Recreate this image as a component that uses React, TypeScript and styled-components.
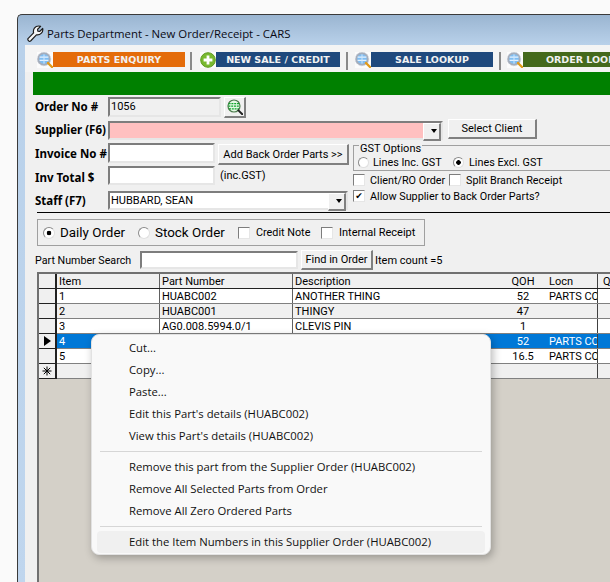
import { Fragment } from "react";
import { createGlobalStyle, styled } from "styled-components";

const GlobalStyle = createGlobalStyle`
  html, body { margin: 0; padding: 0; background: #fafafa; }
  * { box-sizing: border-box; }
`;

const FORM_FONT = `Roboto, "Liberation Sans", sans-serif`;

const tabs = [
  { label: "PARTS ENQUIRY", colour: "#e46c0a", width: 132, icon: "search", before: 5, after: 8 },
  { label: "NEW SALE / CREDIT", colour: "#1f497d", width: 124, icon: "plus", before: 6, after: 7 },
  { label: "SALE LOOKUP", colour: "#1f497d", width: 122, icon: "search", before: 6, after: 6 },
  { label: "ORDER LOOKUP", colour: "#44691c", width: 130, icon: "search", before: 0, after: 0 },
];

const rows = [
  { item: "1", part: "HUABC002", desc: "ANOTHER THING", qoh: "52", locn: "PARTS COUNTER" },
  { item: "2", part: "HUABC001", desc: "THINGY", qoh: "47", locn: "" },
  { item: "3", part: "AG0.008.5994.0/1", desc: "CLEVIS PIN", qoh: "1", locn: "" },
  { item: "4", part: "HUABC002", desc: "ANOTHER THING", qoh: "52", locn: "PARTS COUNTER" },
  { item: "5", part: "HUABC001", desc: "THINGY", qoh: "16.5", locn: "PARTS COUNTER" },
];

const menuGroups = [
  ["Cut...", "Copy...", "Paste...", "Edit this Part's details (HUABC002)", "View this Part's details (HUABC002)"],
  ["Remove this part from the Supplier Order (HUABC002)", "Remove All Selected Parts from Order", "Remove All Zero Ordered Parts"],
  ["Edit the Item Numbers in this Supplier Order (HUABC002)"],
];

export default function App() {
  return (
    <Page>
      <GlobalStyle />
      <Window>
        <TitleBar>
          <WrenchIcon />
          <TitleText>Parts Department - New Order/Receipt - CARS</TitleText>
        </TitleBar>
        <Client>
          <TabStrip>
            {tabs.map((t, i) => (
              <Tab key={t.label}>
                {t.icon === "plus" ? <PlusIcon /> : <SearchIcon />}
                <TabLabel $colour={t.colour} $width={t.width}>{t.label}</TabLabel>
                {i < 3 && <TabDivider $before={t.before} $after={t.after} />}
              </Tab>
            ))}
          </TabStrip>
          <GreenBar />
          <FormArea>
            <FormRow $height={22}>
              <FieldLabel $drop={-2}>Order No #</FieldLabel>
              <ReadOnlyInput>1056</ReadOnlyInput>
              <IconButton><LookupIcon /></IconButton>
            </FormRow>
            <FormRow $height={24}>
              <FieldLabel $drop={-2}>Supplier (F6)</FieldLabel>
              <Combo $width={335} $bg="#ffc0c0" />
              <PushButton $width={89} $height={20} $left={5} $up={3}>Select Client</PushButton>
            </FormRow>
            <SplitRows>
              <LeftFields>
                <FormRow $height={21}>
                  <FieldLabel $drop={1}>Invoice No #</FieldLabel>
                  <TextBox $width={107} $height={20} />
                  <PushButton $width={131} $height={21} $left={3} $up={-4}>Add Back Order Parts &gt;&gt;</PushButton>
                </FormRow>
                <FormRow $height={25}>
                  <FieldLabel $drop={3}>Inv Total $</FieldLabel>
                  <TextBox $width={107} $height={19} />
                  <Note>(inc.GST)</Note>
                </FormRow>
                <FormRow $height={24}>
                  <FieldLabel>Staff (F7)</FieldLabel>
                  <Combo $width={240} $bg="#fff">HUBBARD, SEAN</Combo>
                </FormRow>
              </LeftFields>
              <RightOptions>
                <GstGroup>
                  <GstLegend>GST Options</GstLegend>
                  <OptionLabel $width={95} $gap={4}><Radio />Lines Inc. GST</OptionLabel>
                  <OptionLabel $gap={5}><Radio $on />Lines Excl. GST</OptionLabel>
                </GstGroup>
                <CheckRow>
                  <OptionLabel $width={96} $gap={5}><Check />Client/RO Order</OptionLabel>
                  <OptionLabel $gap={5}><Check />Split Branch Receipt</OptionLabel>
                </CheckRow>
                <CheckRow>
                  <OptionLabel $gap={5}><Check $on />Allow Supplier to Back Order Parts?</OptionLabel>
                </CheckRow>
              </RightOptions>
            </SplitRows>
            <BlackRule />
            <OrderTypeBox>
              <OptionLabel $width={95} $gap={5} $size={13.4}><Radio $big $on />Daily Order</OptionLabel>
              <OptionLabel $width={100} $gap={5} $size={13.4}><Radio $big />Stock Order</OptionLabel>
              <OptionLabel $width={83} $gap={6}><Check />Credit Note</OptionLabel>
              <OptionLabel $gap={6} $size={11}><Check />Internal Receipt</OptionLabel>
            </OrderTypeBox>
            <SearchRow>
              <SearchLabel>Part Number Search</SearchLabel>
              <TextBox $width={158} $height={18} />
              <PushButton $width={72} $height={20} $left={3}>Find in Order</PushButton>
              <ItemCount>Item count =5</ItemCount>
            </SearchRow>
          </FormArea>
          <GridWrap>
            <GridRow $bg="#f0f0f0" $header>
              <RowHead />
              <ItemCell>Item</ItemCell>
              <PartCell>Part Number</PartCell>
              <DescCell>Description</DescCell>
              <QohCell>QOH</QohCell>
              <LocnCell>Locn</LocnCell>
              <LastCell>Q</LastCell>
            </GridRow>
            {rows.map((r, i) => (
              <GridRow key={r.item} $bg={i === 3 ? "#0078d7" : i === 1 ? "#f0f0f0" : "#fff"} $selected={i === 3}>
                <RowHead>{i === 3 && <RowPointer />}</RowHead>
                <ItemCell>{r.item}</ItemCell>
                <PartCell>{r.part}</PartCell>
                <DescCell>{r.desc}</DescCell>
                <QohCell>{r.qoh}</QohCell>
                <LocnCell>{r.locn}</LocnCell>
                <LastCell />
              </GridRow>
            ))}
            <GridRow $bg="#f0f0f0">
              <RowHead><NewRowIcon /></RowHead>
              <ItemCell />
              <PartCell />
              <DescCell />
              <QohCell />
              <LocnCell />
              <LastCell />
            </GridRow>
          </GridWrap>
        </Client>
      </Window>
      <ContextMenu>
        {menuGroups.map((group, g) => (
          <Fragment key={g}>
            {g > 0 && <MenuSeparator />}
            {group.map((label) => (
              <MenuItem key={label} $hot={g === 2}>{label}</MenuItem>
            ))}
          </Fragment>
        ))}
      </ContextMenu>
    </Page>
  );
}

function WrenchIcon() {
  return (
    <TitleIcon viewBox="0 0 17 17">
      <path
        d="M1 13.6 L6.6 7.9 C5.7 4.2 8 1 11.6 1 C12.4 1 13 1.1 13.6 1.4 L10.6 4.2 L10.8 6.1 L12.6 6.5 L15.7 3.5 C16.4 7 13.6 10.4 9.4 9.9 L3.6 16 C2.9 16.5 2.2 16.4 1.6 15.8 C0.8 15 0.6 14.2 1 13.6 Z"
        fill="#f6f6f6"
        stroke="#1c1c1c"
        strokeWidth="1.2"
        strokeLinejoin="round"
      />
    </TitleIcon>
  );
}

function SearchIcon() {
  return (
    <TabIcon viewBox="0 0 16 16">
      <circle cx="7" cy="7" r="6.8" fill="#a5adbb" stroke="#c9ced8" strokeWidth="0.6" strokeDasharray="1.6 1" />
      <circle cx="7" cy="7" r="4.8" fill="#7fbdf2" />
      <path d="M2.6 5.2 H11.4 M2.6 8.4 H11.4" stroke="#e4f2ff" strokeWidth="1.3" />
      <path d="M7 2.4 V11.6" stroke="#cfe6fb" strokeWidth="1" />
      <path d="M11 11 L15 15" stroke="#e29a18" strokeWidth="2.4" strokeLinecap="round" />
    </TabIcon>
  );
}

function PlusIcon() {
  return (
    <TabIcon viewBox="0 0 16 16">
      <circle cx="8" cy="8" r="7.3" fill="#79b92f" stroke="#5f9a22" strokeWidth="1" />
      <path d="M8 3.6 V12.4 M3.6 8 H12.4" stroke="#fff" strokeWidth="2.8" />
    </TabIcon>
  );
}

function LookupIcon() {
  return (
    <svg width="16" height="16" viewBox="0 0 16 16">
      <circle cx="7" cy="7" r="6" fill="#e4f8e4" stroke="#4a7a4a" strokeWidth="1.2" />
      <path d="M1.6 4.6 H12.4 M1.4 7.2 H12.6 M2 9.8 H12" stroke="#0fa52c" strokeWidth="1.3" strokeDasharray="2 0.8" />
      <path d="M11.4 11.4 L15.4 15.4" stroke="#222" strokeWidth="2" strokeLinecap="round" />
    </svg>
  );
}

function NewRowIcon() {
  return (
    <svg width="10" height="10" viewBox="0 0 10 10">
      <path d="M5 0.5 V9.5 M0.5 5 H9.5 M1.8 1.8 L8.2 8.2 M8.2 1.8 L1.8 8.2" stroke="#000" strokeWidth="1" />
    </svg>
  );
}

const Page = styled.div`
  position: relative;
  width: 610px;
  height: 582px;
  overflow: hidden;
  padding: 14px 0 0 17px;
  background: #fafafa;
`;

const Window = styled.div`
  width: 640px;
  height: 580px;
  border: 1px solid #3a3a3a;
  border-right: 0;
  border-bottom: 0;
  border-radius: 5px 0 0 0;
  padding-left: 7px;
  background: linear-gradient(180deg, #9ab5d1 0, #b9d1ea 30px, #c0d6ee 100%);
`;

const TitleBar = styled.div`
  display: flex;
  align-items: center;
  height: 30px;
  margin-left: -7px;
  padding: 6px 0 0 9px;
  gap: 3px;
`;

const TitleIcon = styled.svg`
  width: 17px;
  height: 17px;
  flex: none;
`;

const TitleText = styled.span`
  font: 11.4px "Open Sans", "Noto Sans", sans-serif;
  color: #0a0a14;
`;

const Client = styled.div`
  height: 100%;
  background: #f0f0f0;
  font-family: ${FORM_FONT};
  font-size: 11px;
  color: #000;
`;

const TabStrip = styled.div`
  display: flex;
  height: 27px;
  padding: 7px 0 0 12px;
  background: #f4f4f4;
`;

const Tab = styled.div`
  display: flex;
  align-items: flex-start;
  flex: none;
`;

const TabIcon = styled.svg`
  width: 16px;
  height: 16px;
  flex: none;
  background: #fcfcfc;
`;

const TabLabel = styled.div<{ $colour: string; $width: number }>`
  width: ${(p) => p.$width}px;
  height: 15px;
  background: ${(p) => p.$colour};
  color: #f2f2f2;
  font: bold 9.5px/15px "DejaVu Sans", sans-serif;
  text-align: center;
  white-space: nowrap;
  overflow: hidden;
`;

const TabDivider = styled.div<{ $before: number; $after: number }>`
  width: 2px;
  height: 18px;
  margin: 0 ${(p) => p.$after}px 0 ${(p) => p.$before}px;
  background: #8a8a8a;
`;

const GreenBar = styled.div`
  height: 23px;
  margin-left: 8px;
  background: #008000;
`;

const FormArea = styled.div`
  padding: 1px 0 0 10px;
`;

const FormRow = styled.div<{ $height: number }>`
  display: flex;
  align-items: center;
  height: ${(p) => p.$height}px;
`;

const FieldLabel = styled.label<{ $drop?: number }>`
  width: 73px;
  flex: none;
  margin-top: ${(p) => p.$drop ?? 0}px;
  font: 700 11.5px "Noto Sans", sans-serif;
  color: #000;
  white-space: nowrap;
`;

const sunken = `
  border: 2px solid;
  border-color: #7d7d7d #e6e6e6 #e6e6e6 #7d7d7d;
`;

const raised = `
  border-style: solid;
  border-width: 1px 2px 2px 1px;
  border-color: #fff #808080 #808080 #fff;
`;

const ReadOnlyInput = styled.div`
  width: 113px;
  height: 20px;
  ${sunken}
  padding-left: 1px;
  line-height: 15px;
`;

const IconButton = styled.button`
  width: 22px;
  height: 21px;
  margin-left: 3px;
  padding: 0;
  display: flex;
  align-items: center;
  justify-content: center;
  background: #f0f0f0;
  ${raised}
`;

const TextBox = styled.div<{ $width: number; $height: number }>`
  width: ${(p) => p.$width}px;
  height: ${(p) => p.$height}px;
  flex: none;
  ${sunken}
  background: #fff;
`;

const Combo = styled.div<{ $width: number; $bg: string }>`
  position: relative;
  width: ${(p) => p.$width}px;
  height: 19px;
  flex: none;
  ${sunken}
  background: ${(p) => p.$bg};
  line-height: 15px;
  padding-left: 1px;
  white-space: nowrap;
  &::after {
    content: "";
    position: absolute;
    top: 0;
    right: 0;
    width: 15px;
    height: 15px;
    background: #f0f0f0;
    ${raised}
  }
  &::before {
    content: "";
    position: absolute;
    z-index: 1;
    top: 6px;
    right: 4px;
    border: 3px solid transparent;
    border-top: 4px solid #000;
    border-bottom: 0;
  }
`;

const PushButton = styled.button<{ $width: number; $height: number; $left: number; $up?: number }>`
  width: ${(p) => p.$width}px;
  height: ${(p) => p.$height}px;
  margin: 0 0 ${(p) => p.$up ?? 0}px ${(p) => p.$left}px;
  flex: none;
  padding: 0;
  font: 11px ${FORM_FONT};
  color: #000;
  white-space: nowrap;
  background: #f0f0f0;
  ${raised}
`;

const Note = styled.span`
  margin-left: 5px;
`;

const SplitRows = styled.div`
  display: flex;
`;

const LeftFields = styled.div`
  width: 317px;
  flex: none;
`;

const RightOptions = styled.div`
  padding-left: 1px;
`;

const GstGroup = styled.div`
  position: relative;
  display: flex;
  align-items: center;
  width: 300px;
  height: 26px;
  margin-top: 3px;
  padding: 8px 0 0 4px;
  border: 1px solid #a0a0a0;
  border-right: 0;
`;

const GstLegend = styled.span`
  position: absolute;
  top: -4px;
  left: 5px;
  padding: 0 1px;
  background: #f0f0f0;
  line-height: 13px;
`;

const OptionLabel = styled.label<{ $width?: number; $gap: number; $size?: number }>`
  display: flex;
  align-items: center;
  gap: ${(p) => p.$gap}px;
  flex: none;
  width: ${(p) => (p.$width ? `${p.$width}px` : "auto")};
  font-size: ${(p) => p.$size ?? 10.8}px;
  white-space: nowrap;
`;

const Radio = styled.span<{ $on?: boolean; $big?: boolean }>`
  display: inline-block;
  width: ${(p) => (p.$big ? 12 : 11)}px;
  height: ${(p) => (p.$big ? 12 : 11)}px;
  flex: none;
  border-radius: 50%;
  border: 1px solid;
  border-color: #8a8a8a #e0e0e0 #e0e0e0 #8a8a8a;
  background: ${(p) =>
    p.$on ? "radial-gradient(circle, #000 0, #000 2px, #fff 2.6px)" : "#fff"};
`;

const CheckRow = styled.div`
  display: flex;
  align-items: center;
  height: 16px;
  &:nth-child(2) {
    margin-top: 1px;
  }
`;

const Check = styled.span<{ $on?: boolean }>`
  display: flex;
  align-items: center;
  justify-content: center;
  width: 12px;
  height: 12px;
  flex: none;
  border: 1px solid;
  border-color: #7d7d7d #e6e6e6 #e6e6e6 #7d7d7d;
  background: #fff;
  &::after {
    content: ${(p) => (p.$on ? '"✔"' : '""')};
    font: bold 9px/10px "DejaVu Sans", sans-serif;
    color: #000;
  }
`;

const BlackRule = styled.div`
  height: 1px;
  margin-left: 2px;
  background: #000;
`;

const OrderTypeBox = styled.div`
  display: flex;
  align-items: center;
  width: 388px;
  height: 27px;
  margin: 6px 0 0 2px;
  padding-left: 5px;
  border: 1px solid #a0a0a0;
`;

const SearchRow = styled.div`
  display: flex;
  align-items: center;
  height: 20px;
  margin-top: 4px;
`;

const SearchLabel = styled.span`
  width: 105px;
  flex: none;
  font-size: 10.7px;
  white-space: nowrap;
`;

const ItemCount = styled.span`
  margin-left: 2px;
  white-space: nowrap;
`;

const GridWrap = styled.div`
  height: 320px;
  margin: 2px 0 0 12px;
  border-left: 2px solid #707070;
  border-top: 2px solid #707070;
  background: #d4d0c8;
`;

const GridRow = styled.div<{ $bg: string; $header?: boolean; $selected?: boolean }>`
  display: flex;
  height: 15px;
  line-height: 16px;
  background: ${(p) => p.$bg};
  color: ${(p) => (p.$selected ? "#fff" : "#000")};
  border-bottom: 1px solid ${(p) => (p.$header ? "#222" : "#808080")};
  white-space: nowrap;
`;

const RowHead = styled.div`
  display: flex;
  align-items: center;
  justify-content: center;
  width: 18px;
  height: 15px;
  flex: none;
  background: #f0f0f0;
  border-right: 2px solid #222;
  border-bottom: 1px solid #222;
  color: #000;
`;

const RowPointer = styled.span`
  width: 0;
  height: 0;
  border: 5px solid transparent;
  border-left: 7px solid #000;
  border-right: 0;
`;

const ItemCell = styled.div`
  width: 103px;
  flex: none;
  padding-left: 2px;
  border-right: 1px solid #606060;
`;

const PartCell = styled.div`
  width: 133px;
  flex: none;
  padding-left: 2px;
  border-right: 1px solid #606060;
`;

const DescCell = styled.div`
  width: 216px;
  flex: none;
  padding-left: 2px;
`;

const QohCell = styled.div`
  width: 28px;
  flex: none;
  text-align: center;
`;

const LocnCell = styled.div`
  width: 61px;
  flex: none;
  padding: 0 2px 0 12px;
  overflow: hidden;
  border-right: 1px solid #404040;
`;

const LastCell = styled.div`
  flex: 1;
  padding-left: 5px;
`;

const ContextMenu = styled.div`
  position: absolute;
  left: 91px;
  top: 334px;
  width: 400px;
  height: 221px;
  padding: 2px 5px;
  background: #f9f9f9;
  border: 1px solid #e2e2e2;
  border-radius: 8px;
  box-shadow: 2px 3px 9px rgba(0, 0, 0, 0.28);
  font: 11.3px "Open Sans", "Noto Sans", sans-serif;
  color: #111;
`;

const MenuSeparator = styled.div`
  height: 1px;
  margin: 4px 3px;
  background: #d6d6d6;
`;

const MenuItem = styled.div<{ $hot?: boolean }>`
  height: 22px;
  line-height: 22px;
  padding-left: 32px;
  border-radius: 4px;
  white-space: nowrap;
  background: ${(p) => (p.$hot ? "#f0f0f0" : "transparent")};
`;
